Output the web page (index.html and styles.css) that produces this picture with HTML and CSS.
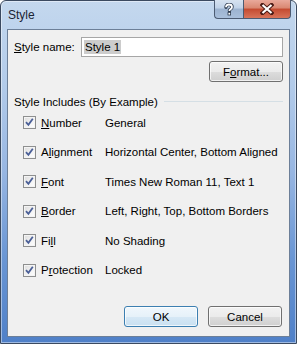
FILE: index.html
```html
<!DOCTYPE html>
<html lang="en">
<head>
    <meta charset="UTF-8">
    <title>Style</title>
    <link rel="stylesheet" href="styles.css">
</head>
<body>
<div class="window">
    <div class="titlebar">
        <span class="title">Style</span>
        <div class="caption-buttons">
            <div class="cap-btn help">
                <svg width="12" height="13" viewBox="0 0 12 13">
                    <path d="M3 4.2 Q3 1.5 6 1.5 Q9 1.5 9 4 Q9 5.6 7.3 6.3 Q6.4 6.8 6.4 8" fill="none" stroke="#2c3a4e" stroke-width="3.4" stroke-linecap="round"/>
                    <path d="M3 4.2 Q3 1.5 6 1.5 Q9 1.5 9 4 Q9 5.6 7.3 6.3 Q6.4 6.8 6.4 8" fill="none" stroke="#ffffff" stroke-width="1.8"/>
                    <rect x="4.6" y="9" width="3.4" height="3.4" fill="#2c3a4e"/>
                    <rect x="5.4" y="9.8" width="1.8" height="1.8" fill="#ffffff"/>
                </svg>
            </div>
            <div class="cap-btn close">
                <svg width="14" height="12" viewBox="0 0 14 12">
                    <path d="M2.5 2 L11.5 10 M11.5 2 L2.5 10" stroke="#4a1a14" stroke-width="4.2" stroke-linecap="square"/>
                    <path d="M2.5 2 L11.5 10 M11.5 2 L2.5 10" stroke="#ffffff" stroke-width="2.2"/>
                </svg>
            </div>
        </div>
    </div>

    <div class="client">
        <div class="name-row">
            <label class="name-label" for="style-name"><u>S</u>tyle name:</label>
            <div class="textbox" id="style-name"><span class="selected">Style 1</span></div>
        </div>

        <button class="btn format">F<u>o</u>rmat...</button>

        <div class="group-head">
            <span>Style Includes (By Example)</span>
            <div class="rule"></div>
        </div>

        <div class="includes">
            <div class="item">
                <span class="check"><svg width="11" height="11" viewBox="0 0 11 11"><path d="M2 5.2 L4.4 7.8 L8.8 1.8" fill="none" stroke="#4a5f97" stroke-width="1.8"/></svg></span>
                <span class="item-label"><u>N</u>umber</span>
                <span class="item-value">General</span>
            </div>
            <div class="item">
                <span class="check"><svg width="11" height="11" viewBox="0 0 11 11"><path d="M2 5.2 L4.4 7.8 L8.8 1.8" fill="none" stroke="#4a5f97" stroke-width="1.8"/></svg></span>
                <span class="item-label">A<u>l</u>ignment</span>
                <span class="item-value">Horizontal Center, Bottom Aligned</span>
            </div>
            <div class="item">
                <span class="check"><svg width="11" height="11" viewBox="0 0 11 11"><path d="M2 5.2 L4.4 7.8 L8.8 1.8" fill="none" stroke="#4a5f97" stroke-width="1.8"/></svg></span>
                <span class="item-label"><u>F</u>ont</span>
                <span class="item-value">Times New Roman 11, Text 1</span>
            </div>
            <div class="item">
                <span class="check"><svg width="11" height="11" viewBox="0 0 11 11"><path d="M2 5.2 L4.4 7.8 L8.8 1.8" fill="none" stroke="#4a5f97" stroke-width="1.8"/></svg></span>
                <span class="item-label"><u>B</u>order</span>
                <span class="item-value">Left, Right, Top, Bottom Borders</span>
            </div>
            <div class="item">
                <span class="check"><svg width="11" height="11" viewBox="0 0 11 11"><path d="M2 5.2 L4.4 7.8 L8.8 1.8" fill="none" stroke="#4a5f97" stroke-width="1.8"/></svg></span>
                <span class="item-label">Fi<u>l</u>l</span>
                <span class="item-value">No Shading</span>
            </div>
            <div class="item">
                <span class="check"><svg width="11" height="11" viewBox="0 0 11 11"><path d="M2 5.2 L4.4 7.8 L8.8 1.8" fill="none" stroke="#4a5f97" stroke-width="1.8"/></svg></span>
                <span class="item-label">P<u>r</u>otection</span>
                <span class="item-value">Locked</span>
            </div>
        </div>

        <div class="actions">
            <button class="btn default">OK</button>
            <button class="btn">Cancel</button>
        </div>
    </div>
</div>
</body>
</html>
```

FILE: styles.css
```css
html, body {
    margin: 0;
    padding: 0;
    background: #ffffff;
}

body {
    font-family: 'Liberation Sans', Arial, sans-serif;
    font-size: 11.5px;
    color: #000000;
}

.window {
    width: 297px;
    height: 344px;
    box-sizing: border-box;
    border: 1px solid #3b4a60;
    border-radius: 6px 6px 0 0;
    padding: 0 6px 6px;
    display: flex;
    flex-direction: column;
    background: linear-gradient(to bottom, #c4d8ee 0%, #b2cbea 25%, #97b6e2 50%, #6a96d4 75%, #4f80c8 100%);
    box-shadow: inset 0 0 0 1px rgba(255, 255, 255, 0.45);
}

.titlebar {
    height: 28px;
    display: flex;
    justify-content: space-between;
    align-items: flex-start;
}

.title {
    padding: 7px 0 0 1px;
    font-size: 12px;
    color: #1b2433;
}

.caption-buttons {
    display: flex;
    margin-right: -1px;
    margin-top: -1px;
}

.cap-btn {
    height: 19px;
    box-sizing: border-box;
    border: 1px solid #4c5b72;
    border-top: none;
    display: flex;
    align-items: center;
    justify-content: center;
}

.help {
    width: 29px;
    border-radius: 0 0 0 4px;
    border-right: none;
    background: linear-gradient(to bottom, #d6e2f0 0%, #c0d2e8 45%, #9cb3d0 50%, #a9bfdb 100%);
}

.close {
    width: 48px;
    border-radius: 0 0 4px 0;
    background: linear-gradient(to bottom, #e9a99b 0%, #d98771 45%, #c44a30 50%, #d8745a 100%);
}

.client {
    flex: 1;
    display: flex;
    flex-direction: column;
    background: #f0f0f0;
    border: 1px solid #6c7f98;
    padding: 7px 6px 9px 6px;
}

.name-row {
    display: flex;
    align-items: center;
    height: 20px;
}

.name-label {
    width: 67px;
}

.textbox {
    flex: 1;
    height: 20px;
    box-sizing: border-box;
    border: 1px solid #a6a6a6;
    background: #ffffff;
    padding: 2px 2px;
    display: flex;
    align-items: center;
}

.selected {
    background: #cccccc;
    padding: 1px 1px;
    line-height: 12px;
}

.btn {
    font-family: inherit;
    font-size: 11.5px;
    color: #000000;
    width: 74px;
    height: 21px;
    padding: 0;
    border: 1px solid #707070;
    border-radius: 3px;
    background: linear-gradient(to bottom, #f2f2f2 0%, #ebebeb 50%, #dddddd 51%, #cfcfcf 100%);
    box-shadow: inset 0 0 0 1px rgba(255, 255, 255, 0.7);
}

.btn.default {
    border-color: #3c7fb1;
    background: linear-gradient(to bottom, #f0f7fc 0%, #e6f1f9 50%, #d6e8f5 51%, #c9e0f1 100%);
}

.format {
    align-self: flex-end;
    margin-top: 4px;
}

.group-head {
    display: flex;
    align-items: center;
    margin-top: 12px;
    height: 15px;
}

.rule {
    flex: 1;
    margin-left: 6px;
    border-top: 1px solid #d5dfe5;
}

.includes {
    margin-top: -1px;
}

.item {
    display: flex;
    align-items: center;
    height: 29.5px;
}

.check {
    width: 13px;
    height: 13px;
    box-sizing: border-box;
    margin-left: 9px;
    margin-right: 5px;
    border: 1px solid #8e8f8f;
    background: linear-gradient(135deg, #dcdcdc 0%, #f4f4f4 60%, #ffffff 100%);
    box-shadow: inset 0 0 0 1px #f4f4f4;
    display: flex;
    align-items: center;
    justify-content: center;
}

.item-label {
    width: 64px;
}

.actions {
    margin-top: auto;
    display: flex;
    justify-content: flex-end;
    gap: 10px;
    padding-right: 1px;
}
```
